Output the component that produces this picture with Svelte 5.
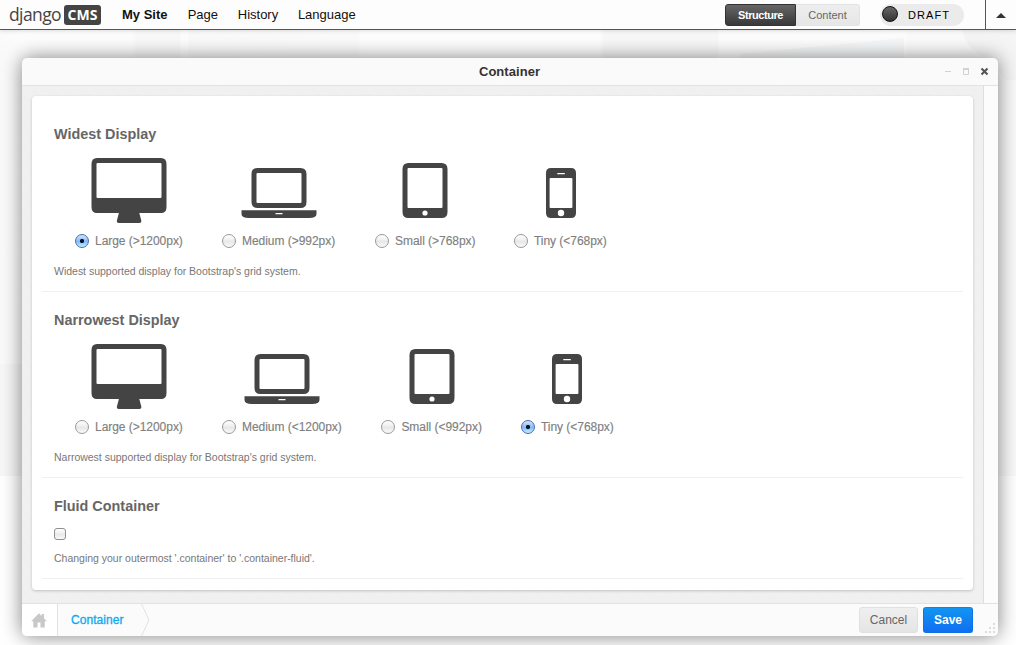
<script>
  const groups = $state([
    {
      name: 'widest',
      title: 'Widest Display',
      help: "Widest supported display for Bootstrap's grid system.",
      value: 'desktop',
      options: [
        { icon: 'desktop', label: 'Large (>1200px)', width: 108 },
        { icon: 'laptop', label: 'Medium (>992px)', width: 114 },
        { icon: 'tablet', label: 'Small (>768px)', width: 100 },
        { icon: 'phone', label: 'Tiny (<768px)', width: 93 }
      ]
    },
    {
      name: 'narrowest',
      title: 'Narrowest Display',
      help: "Narrowest supported display for Bootstrap's grid system.",
      value: 'phone',
      options: [
        { icon: 'desktop', label: 'Large (>1200px)', width: 108 },
        { icon: 'laptop', label: 'Medium (<1200px)', width: 120.4 },
        { icon: 'tablet', label: 'Small (<992px)', width: 100.6 },
        { icon: 'phone', label: 'Tiny (<768px)', width: 92 }
      ]
    }
  ]);
  const menu = ['Page', 'History', 'Language'];
</script>

{#snippet device(kind)}
  <svg class="device" width="76" height="66" viewBox="0 0 76 66" fill="#444">
    {#if kind === 'desktop'}
      <path fill-rule="evenodd" d="M6 0H70Q75.5 0 75.5 6V49Q75.5 55 70 55H48.3L50.3 62.5Q50.7 65 48.2 65H28Q25.5 65 25.9 62.5L27.9 55H6Q.5 55 .5 49V6Q.5 0 6 0ZM6.5 5Q5.5 5 5.5 6V39Q5.5 40 6.5 40H69.5Q70.5 40 70.5 39V6Q70.5 5 69.5 5Z" />
    {:else if kind === 'laptop'}
      <path fill-rule="evenodd" d="M16.5 10H59.5Q65.5 10 65.5 16V44Q65.5 50 59.5 50H16.5Q10.5 50 10.5 44V16Q10.5 10 16.5 10ZM16.5 15Q15.5 15 15.5 16V44Q15.5 45 16.5 45H59.5Q60.5 45 60.5 44V16Q60.5 15 59.5 15Z" />
      <path fill-rule="evenodd" d="M.5 52.3H75.5V56Q75.5 60 68 60H8Q.5 60 .5 56ZM34.5 55V56.3H41.5V55Z" />
    {:else if kind === 'tablet'}
      <path fill-rule="evenodd" d="M21.5 5H54.5Q60.5 5 60.5 11V54Q60.5 60 54.5 60H21.5Q15.5 60 15.5 54V11Q15.5 5 21.5 5ZM21.5 10Q20.5 10 20.5 11V49Q20.5 50 21.5 50H54.5Q55.5 50 55.5 49V11Q55.5 10 54.5 10Z" />
      <circle cx="38" cy="55" r="2.6" fill="#fff" />
    {:else}
      <path fill-rule="evenodd" d="M28 10H48Q53 10 53 15V55Q53 60 48 60H28Q23 60 23 55V15Q23 10 28 10ZM27.5 20Q26.6 20 26.6 21V49Q26.6 50 27.5 50H48.5Q49.4 50 49.4 49V21Q49.4 20 48.5 20ZM34.3 15V16.2H41.8V15Z" />
      <circle cx="38" cy="55" r="3.2" fill="#fff" />
    {/if}
  </svg>
{/snippet}

<div class="page">
  <div class="backdrop">
    <svg width="1016" height="60" viewBox="0 0 1016 60">
      <path d="M740 24L904 8V60H740Z" fill="#f6f7f8" />
      <path d="M962 0Q966 20 990 30L1006 50H1016V0Z" fill="#f5f5f5" />
    </svg>
  </div>
  <header class="toolbar">
    <a class="logo" href="#home"><span class="django">django</span><span class="cms">CMS</span></a>
    <nav>
      <a class="site" href="#site">My Site</a>
      {#each menu as item}
        <a href="#{item}">{item}</a>
      {/each}
    </nav>
    <div class="modes">
      <button class="structure">Structure</button><button class="content">Content</button>
    </div>
    <div class="draft"><i></i><span>DRAFT</span></div>
    <div class="collapse"><i></i></div>
  </header>

  <section class="modal">
    <div class="head">
      <h1>Container</h1>
      <svg class="controls" width="46" height="12" viewBox="0 0 46 12">
        <path d="M1 5.5H7" stroke="#d2d2d2" />
        <path d="M19.5 3V8.5H24.5V3" fill="none" stroke="#d2d2d2" /><path d="M19 3H25" stroke="#d2d2d2" stroke-width="2" />
        <path d="M37.5 2.5L43.5 8.5M43.5 2.5L37.5 8.5" stroke="#555" stroke-width="2.1" />
      </svg>
    </div>
    <div class="body">
      <div class="frame">
        <div class="card">
          {#each groups as group}
            <fieldset>
              <h2>{group.title}</h2>
              <div class="options">
                {#each group.options as option}
                  <label style="width: {option.width}px">
                    {@render device(option.icon)}
                    <span class="choice">
                      <input type="radio" name={group.name} value={option.icon} bind:group={group.value} />
                      <span class="text">{option.label}</span>
                    </span>
                  </label>
                {/each}
              </div>
              <p>{group.help}</p>
            </fieldset>
          {/each}
          <fieldset class="fluid">
            <h2>Fluid Container</h2>
            <input type="checkbox" />
            <p>Changing your outermost '.container' to '.container-fluid'.</p>
          </fieldset>
        </div>
      </div>
      <div class="gutter"></div>
    </div>
    <footer>
      <div class="home">
        <svg width="16" height="15" viewBox="0 0 16 15" fill="#c8c8c8"><path d="M8 .3L10.7 3V1H13V5.3L15.8 8.2H13.7V14.5H9.5V9.5H6.5V14.5H2.3V8.2H.2Z" /></svg>
      </div>
      <div class="crumb">Container</div>
      <svg class="chevron" width="9" height="32" viewBox="0 0 9 32" fill="none"><path d="M.5 0L8 16L.5 32" stroke="#e2e2e2" /></svg>
      <div class="actions">
        <button class="cancel">Cancel</button>
        <button class="save">Save</button>
      </div>
      <svg class="grip" width="12" height="12" viewBox="0 0 12 12" fill="#dcdcdc">
        <path d="M8 0h2v2h-2zM4 4h2v2h-2zM8 4h2v2h-2zM0 8h2v2h-2zM4 8h2v2h-2zM8 8h2v2h-2z" />
      </svg>
    </footer>
  </section>
</div>

<style>
  :global(body) { background: #fff; overflow: hidden; }
  * { box-sizing: border-box; }
  .page {
    position: relative;
    width: 1016px;
    height: 645px;
    overflow: hidden;
    font-family: "Liberation Sans", Arial, sans-serif;
  }
  .backdrop {
    position: absolute;
    inset: 30px 0 169px 0;
    background:
      linear-gradient(#fff0 75%, #f7f7f7 75%) 0 0 / 22px 100% no-repeat,
      linear-gradient(90deg, #fafafa 0, #fdfdfd 22px 132px, #f9f9f9 137px 180px, #fdfdfd 181px 188px, #fafafa 189px, #fbfbfb 358px, #fefefe 361px 600px, #f8f8f8 604px 718px, #fdfdfd 719px 906px, #fbfbfb 908px 950px, #f9f9f9);
  }
  a { color: #111; text-decoration: none; }
  button { font-family: inherit; padding: 0; }
  .toolbar {
    position: relative;
    display: flex;
    height: 30px;
    background: #fdfdfd;
    border-bottom: 1px solid #555;
    box-shadow: 0 0 5px #0003;
  }
  .logo { display: flex; padding: 5px 0 0 9px; width: 122px; }
  .django {
    width: 55px;
    font: 17.5px/18px "Open Sans", sans-serif;
    letter-spacing: -0.6px;
    color: #444;
  }
  .cms {
    width: 37px;
    height: 20px;
    border-radius: 3px;
    background: #444;
    color: #fff;
    font: 700 14px/20px "Open Sans", sans-serif;
    text-align: center;
  }
  nav { display: flex; flex: 1; font-size: 13px; line-height: 29px; gap: 19.7px; white-space: nowrap; }
  .site { font-weight: bold; width: 46px; }
  .modes { display: flex; padding-top: 4px; width: 155px; }
  .modes button { height: 22px; font-size: 11px; line-height: 20px; }
  .structure {
    width: 71px;
    color: #fff;
    font-weight: bold;
    letter-spacing: -0.45px;
    background: linear-gradient(#666, #383838);
    border: 1px solid #333;
    border-radius: 3px 0 0 3px;
  }
  .content {
    width: 64px;
    color: #666;
    background: linear-gradient(#eee, #e6e6e6);
    border: 1px solid #e3e3e3;
    border-left: 0;
    border-radius: 0 3px 3px 0;
  }
  .draft {
    display: flex;
    align-items: center;
    width: 84px;
    height: 22px;
    margin: 4px 21px 0 0;
    padding-left: 2px;
    gap: 10px;
    border-radius: 11px;
    background: #ebebeb;
    font-size: 11px;
    letter-spacing: 1.1px;
  }
  .draft i {
    width: 16px;
    height: 16px;
    border: 1px solid #111;
    border-radius: 50%;
    background: linear-gradient(#666, #333);
    margin-top: -2px;
  }
  .collapse { width: 31px; border-left: 1px solid #555; padding: 13px 0 0 10px; }
  .collapse i { display: block; width: 10px; border: 5px solid transparent; border-top: 0; border-bottom-color: #333; }

  .modal {
    position: relative;
    display: flex;
    flex-direction: column;
    width: 976px;
    height: 578px;
    margin: 28px 0 0 22px;
    background: #fafafa;
    border-radius: 5px;
    box-shadow: 0 0 20px #00000080;
  }
  .head { display: flex; height: 28px; border-bottom: 1px solid #e2e2e2; padding-left: 46px; }
  h1 { flex: 1; margin: 0; padding-left: 7px; text-align: center; font-size: 13px; line-height: 27px; color: #333; letter-spacing: .05px; }
  .controls { margin: 8px 8px 0 0; }
  .body { display: flex; flex: 1; min-height: 0; }
  .frame {
    width: 962px;
    padding: 10px;
    border-right: 1px solid #dedede;
    background: repeating-linear-gradient(45deg, #f1f1f1 0 1px, #efefef 1px 2px);
  }
  .gutter { flex: 1; background: #fcfcfc; }
  .card {
    width: 941px;
    height: 494px;
    padding: 9px 10px;
    background: #fff;
    border-radius: 4px;
    box-shadow: 0 1px 3px #0003;
  }
  fieldset { margin: 0; padding: 21px 12px 0; border: 0; border-bottom: 1px solid #f0f0f0; height: 187px; }
  fieldset + fieldset { height: 186px; padding-top: 20px; }
  h2 { margin: 0; height: 32px; font-size: 14.4px; line-height: 16px; color: #666; }
  .options { display: flex; gap: 39px; padding-left: 21px; }
  label { display: flex; flex-direction: column; align-items: center; }
  .device { display: block; }
  .choice { display: flex; width: 100%; gap: 6px; align-items: center; height: 16px; margin-top: 9px; }
  .text { font-size: 12px; color: #808080; white-space: nowrap; letter-spacing: -.04px; -webkit-text-stroke: .15px #808080; }
  input { appearance: none; flex: none; margin: 0; border: 1px solid #9a9a9a; background: linear-gradient(#fff, #eee 45%, #e6e6e6 50%, #fafafa); }
  input[type='radio'] { width: 14px; height: 14px; border-radius: 50%; }
  input[type='radio']:checked {
    border-color: #5169b0;
    background: radial-gradient(circle, #03112b 0 1.7px, #03112b00 2.5px), linear-gradient(#d5e5fa, #86bdf5 50%, #7ebdf8 55%, #c0f0ff);
  }
  input[type='checkbox'] { display: block; width: 12px; height: 12px; border-radius: 3px; border-color: #8e8e8e; }
  p { margin: 16px 0 0; font-size: 10.5px; line-height: 12px; letter-spacing: -.01px; color: #777; white-space: nowrap; }
  fieldset.fluid { height: 101px; }
  .fluid h2 { height: 30px; }
  .fluid p { margin-top: 12px; }

  footer { display: flex; height: 33px; border-top: 1px solid #e2e2e2; border-radius: 0 0 5px 5px; background: #fbfbfb; }
  .home { width: 36px; border-right: 1px solid #e2e2e2; padding: 9px 0 0 9px; background: #fff; border-radius: 0 0 0 5px; }
  .crumb { width: 83px; padding-left: 13px; font-size: 12px; line-height: 32px; color: #0caaee; letter-spacing: .05px; -webkit-text-stroke: .3px #0caaee; }
  .actions { display: flex; flex: 1; justify-content: flex-end; gap: 5px; padding-top: 3px; }
  .actions button { height: 26px; font-size: 12px; border-radius: 3px; }
  .cancel { width: 59px; border: 1px solid #e0e0e0; background: linear-gradient(#efefef, #e5e5e5); color: #666; }
  .save { width: 50px; border: 1px solid #0d72e8; border-top-color: #1384dd; background: linear-gradient(#1195f2, #116ef0); color: #fff; font-weight: bold; }
  .grip { margin: 19px 1px 0 12px; }
</style>
